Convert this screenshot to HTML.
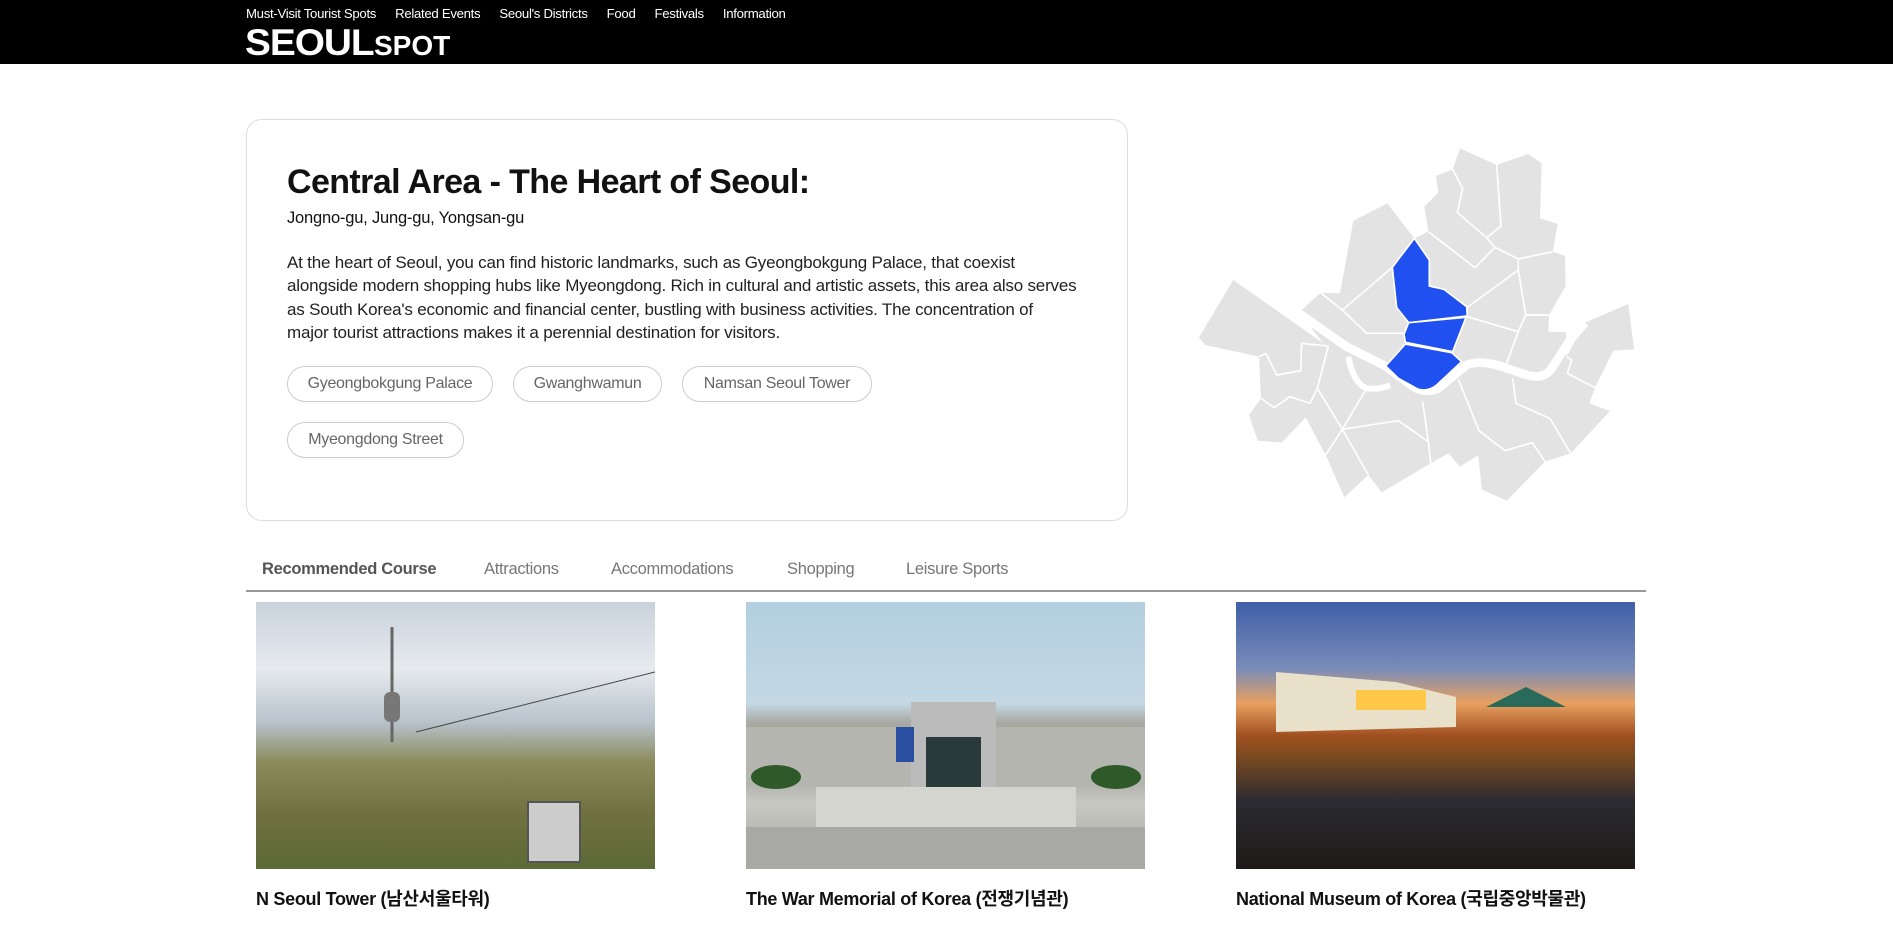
<!DOCTYPE html>
<html><head><meta charset="utf-8">
<style>
*{margin:0;padding:0;box-sizing:border-box}
body{width:1893px;height:940px;overflow:hidden;background:#fff;font-family:"Liberation Sans","Noto Sans CJK KR",sans-serif;color:#111;position:relative}
.hdr{position:absolute;left:0;top:0;width:1893px;height:64px;background:#000}
.nav{position:absolute;top:6px;left:246px;font-size:13.2px;color:#fff;white-space:nowrap;letter-spacing:-0.3px}
.nav span{margin-right:19px}
.logo1{position:absolute;left:245px;top:22px;color:#fff;font-weight:900;font-size:37px;letter-spacing:-1px;transform:scaleX(1.05);transform-origin:left}
.logo2{position:absolute;left:374px;top:30px;color:#fff;font-weight:700;font-size:28px;letter-spacing:0px}
.card{position:absolute;left:246px;top:119px;width:882px;height:402px;border:1px solid #ddd;border-radius:16px}
h1{position:absolute;left:287px;top:163px;font-size:34px;font-weight:700;letter-spacing:-0.6px;white-space:nowrap}
.sub{position:absolute;left:287px;top:209px;font-size:16.5px;letter-spacing:-0.2px}
.p{position:absolute;left:287px;top:251px;font-size:17px;line-height:23.3px;letter-spacing:-0.2px;white-space:nowrap;color:#222}
.chip{position:absolute;height:36px;border:1px solid #ccc;border-radius:18px;font-size:16px;color:#666;line-height:34px;text-align:center;letter-spacing:-0.3px;white-space:nowrap}
.tab{position:absolute;top:560px;font-size:16.5px;color:#777;white-space:nowrap;letter-spacing:-0.3px}
.line{position:absolute;left:246px;top:590px;width:1400px;height:2px;background:#999}
.img{position:absolute;top:602px;width:399px;height:267px}
.cap{position:absolute;top:885px;font-size:18px;font-weight:700;white-space:nowrap;letter-spacing:-0.3px}
</style></head><body>
<div class="hdr"></div>
<div class="nav"><span>Must-Visit Tourist Spots</span><span>Related Events</span><span>Seoul's Districts</span><span>Food</span><span>Festivals</span><span>Information</span></div>
<div class="logo1">SEOUL</div>
<div class="logo2">SPOT</div>

<div class="card"></div>
<h1>Central Area - The Heart of Seoul:</h1>
<div class="sub">Jongno-gu, Jung-gu, Yongsan-gu</div>
<div class="p">At the heart of Seoul, you can find historic landmarks, such as Gyeongbokgung Palace, that coexist<br>alongside modern shopping hubs like Myeongdong. Rich in cultural and artistic assets, this area also serves<br>as South Korea's economic and financial center, bustling with business activities. The concentration of<br>major tourist attractions makes it a perennial destination for visitors.</div>
<div class="chip" style="left:287px;top:366px;width:206px">Gyeongbokgung Palace</div>
<div class="chip" style="left:513px;top:366px;width:149px">Gwanghwamun</div>
<div class="chip" style="left:682px;top:366px;width:190px">Namsan Seoul Tower</div>
<div class="chip" style="left:287px;top:422px;width:177px">Myeongdong Street</div>

<svg style="position:absolute;left:1180px;top:130px" width="480" height="380" viewBox="0 0 1440 1140">
<polygon fill="#e3e3e3" points="840,55 950,105 1045,72 1085,100 1080,265 1133,282 1118,365 1155,378 1157,468 1107,555 1105,605 1158,607 1160,680 1215,578 1345,522 1362,658 1300,662 1245,773 1228,820 1290,843 1172,970 1095,995 980,1112 905,1078 895,975 840,1010 805,970 752,1000 605,1087 565,1035 493,1102 437,975 377,862 305,938 233,932 207,855 243,805 237,680 75,645 57,622 160,450 430,640 358,547 422,488 480,490 520,272 622,220 703,325 745,305 733,230 775,188 768,138 818,118"/>
<g fill="none" stroke="#fff" stroke-width="5" stroke-linejoin="round">
<polyline points="703,325 637,412 487,540 422,488"/>
<polyline points="487,540 560,610 672,610"/>
<polyline points="745,305 885,413 945,352 920,323 832,248 848,175 818,118"/>
<polyline points="950,105 963,288 920,323"/>
<polyline points="945,352 1015,387 1118,365"/>
<polyline points="1015,387 1015,420 862,532"/>
<polyline points="1015,420 1037,555 1107,555"/>
<polyline points="862,560 1015,605 978,705"/>
<polyline points="1037,555 1015,605"/>
<polyline points="445,648 412,775 390,820 330,800 282,833 243,805"/>
<polyline points="445,648 365,640 362,722 290,735 258,670 237,680"/>
<polyline points="412,775 487,898 560,775"/>
<polyline points="487,898 655,872 745,935 752,1000"/>
<polyline points="487,898 437,975"/>
<polyline points="487,898 565,1035"/>
<polyline points="728,815 745,935"/>
<polyline points="835,748 897,902 975,962 1057,938 1095,995"/>
<polyline points="998,745 1008,820 1110,866 1172,970"/>
<polyline points="1160,680 1175,690 1162,730 1245,773"/>
</g>
<path d="M350,545 L500,650 Q560,680 610,705 Q660,740 700,770 Q735,792 775,775 Q830,730 860,705 Q900,690 960,708 L1040,735 Q1090,750 1115,715 L1170,630 L1215,578" fill="none" stroke="#fff" stroke-width="26" stroke-linejoin="round"/>
<path d="M505,680 Q520,760 560,775 Q600,780 630,765" fill="none" stroke="#fff" stroke-width="18"/>
<g fill="#2150f0" stroke="#fff" stroke-width="5" stroke-linejoin="round">
<polygon points="703,325 748,390 748,468 792,478 860,530 862,558 686,578 650,533 637,412"/>
<polygon points="686,578 858,562 818,665 676,637 672,612"/>
<path d="M676,642 L815,668 L845,695 L770,765 Q745,785 715,778 L655,745 L617,708 Z"/>
</g>
</svg>

<div class="tab" style="left:262px;font-weight:700;color:#555">Recommended Course</div>
<div class="tab" style="left:484px">Attractions</div>
<div class="tab" style="left:611px">Accommodations</div>
<div class="tab" style="left:787px">Shopping</div>
<div class="tab" style="left:906px">Leisure Sports</div>
<div class="line"></div>

<div class="img" style="left:256px;background:linear-gradient(180deg,#c9d2dc 0%,#e6eaee 25%,#b8c3cc 45%,#8a8a5a 60%,#6f7040 80%,#5d6a35 100%)"></div>
<svg style="position:absolute;left:256px;top:602px" width="399" height="267"><line x1="136" y1="25" x2="136" y2="140" stroke="#666" stroke-width="3"/><rect x="128" y="90" width="16" height="30" rx="6" fill="#777"/><rect x="272" y="200" width="52" height="60" fill="#ccc" stroke="#555" stroke-width="2"/><line x1="160" y1="130" x2="399" y2="70" stroke="#444"/></svg>
<div class="img" style="left:746px;background:linear-gradient(180deg,#b3cfe0 0%,#c4d8e4 38%,#aaaaa5 45%,#9a9a95 60%,#c8c8c2 75%,#a9a9a5 100%)"></div>
<svg style="position:absolute;left:746px;top:602px" width="399" height="267"><rect x="0" y="125" width="399" height="60" fill="#b5b5b0"/><rect x="165" y="100" width="85" height="85" fill="#bbb"/><rect x="180" y="135" width="55" height="50" fill="#2a3a3a"/><rect x="150" y="125" width="18" height="35" fill="#2a4fa0"/><rect x="70" y="185" width="260" height="40" fill="#d5d5d0"/><rect x="0" y="225" width="399" height="42" fill="#a8a8a4"/><ellipse cx="30" cy="175" rx="25" ry="12" fill="#2e5a2a"/><ellipse cx="370" cy="175" rx="25" ry="12" fill="#2e5a2a"/></svg>
<div class="img" style="left:1236px;background:linear-gradient(180deg,#3f5fa8 0%,#7a8cb8 25%,#e8a060 38%,#a05020 50%,#7a4a20 58%,#2a2a30 75%,#1f1a18 100%)"></div>
<svg style="position:absolute;left:1236px;top:602px" width="399" height="267"><polygon points="40,70 160,80 220,95 220,125 40,130" fill="#e8e0c8"/><rect x="120" y="88" width="70" height="20" fill="#ffc848"/><polygon points="250,105 290,85 330,105" fill="#2a6a5a"/></svg>

<div class="cap" style="left:256px">N Seoul Tower (남산서울타워)</div>
<div class="cap" style="left:746px">The War Memorial of Korea (전쟁기념관)</div>
<div class="cap" style="left:1236px">National Museum of Korea (국립중앙박물관)</div>
</body></html>
